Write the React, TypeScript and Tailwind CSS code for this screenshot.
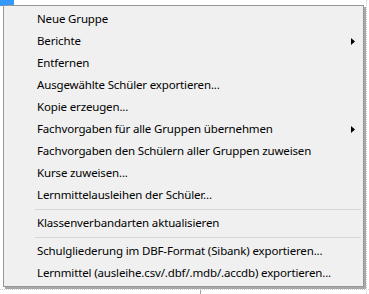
type Item = { label: string; sub?: boolean } | { sep: true }

const items: Item[] = [
    { label: "Neue Gruppe" },
    { label: "Berichte", sub: true },
    { label: "Entfernen" },
    { label: "Ausgewählte Schüler exportieren..." },
    { label: "Kopie erzeugen..." },
    { label: "Fachvorgaben für alle Gruppen übernehmen", sub: true },
    { label: "Fachvorgaben den Schülern aller Gruppen zuweisen" },
    { label: "Kurse zuweisen..." },
    { label: "Lernmittelausleihen der Schüler..." },
    { sep: true },
    { label: "Klassenverbandarten aktualisieren" },
    { sep: true },
    { label: "Schulgliederung im DBF-Format (Sibank) exportieren..." },
    { label: "Lernmittel (ausleihe.csv/.dbf/.mdb/.accdb) exportieren..." },
]

const Arrow = () => (
    <svg width="4" height="7" viewBox="0 0 4 7" className="mr-[8px]">
        <path d="M0 0 L4 3.5 L0 7 Z" fill="#000" />
    </svg>
)

const App = () => {
    return (
        <div className="relative w-[369px] h-[294px] bg-white overflow-hidden font-['Noto_Sans',sans-serif]">
            {/* background bits behind the menu */}
            <div className="absolute left-0 top-0 w-[14px] h-[6px] bg-[#3399ff]" />
            <div className="absolute left-[200px] top-[287px] w-px h-[7px] bg-[#a0a0a0]" />
            <div className="absolute left-[366px] top-0 h-full border-l border-dotted border-[#d0d0d0]" />
            <div className="absolute left-0 top-[289px] w-full border-t border-dotted border-[#d0d0d0]" />

            <div className="absolute left-[3px] top-[5px] w-[361px] bg-[#f0f0f0] border border-[#979797] shadow-[2px_2px_0_#a8a8a8] py-[2px] flex">
                <ul className="flex-1 flex flex-col">
                    {items.map((it, i) =>
                        "sep" in it ? (
                            <li key={i} className="h-[6px] flex items-center pl-[31px] pr-[2px]">
                                <div className="w-full h-px bg-[#d7d7d7]" />
                            </li>
                        ) : (
                            <li key={i} className="h-[22px] flex items-center justify-between pl-[33px] text-[11.5px] tracking-[-0.15px] text-black">
                                <span>{it.label}</span>
                                {it.sub && <Arrow />}
                            </li>
                        )
                    )}
                </ul>
            </div>
        </div>
    )
}

export default App
